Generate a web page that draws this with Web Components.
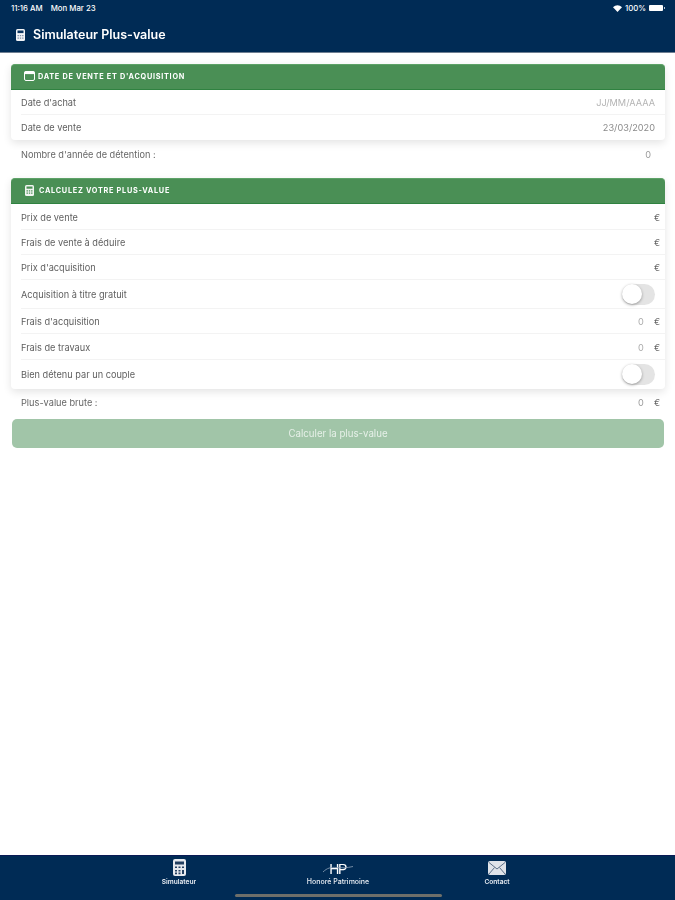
<!DOCTYPE html>
<html lang="fr">
<head>
<meta charset="UTF-8">
<title>Simulateur Plus-value</title>
<style>
  html, body { margin: 0; height: 100%; background: #fff; }
  body { font-family: Inter, "Liberation Sans", sans-serif; color: #555; }
  #app { display: flex; flex-direction: column; height: 900px; overflow: hidden; filter: blur(.5px); }
  main { flex: 1; display: flex; flex-direction: column; padding: 11px 10px 0 11px; }
</style>
</head>
<body>
<div id="app">
  <app-header title="Simulateur Plus-value"></app-header>
  <main>
    <form-card icon="calendar" heading="DATE DE VENTE ET D'ACQUISITION">
      <form-row label="Date d'achat" height="25"><span style="color:#b4b4b4">JJ/MM/AAAA</span></form-row>
      <form-row label="Date de vente" height="25" last><span style="color:#8a8a8a">23/03/2020</span></form-row>
    </form-card>
    <info-row label="Nombre d'année de détention :" value="0" height="28" bottom="10"></info-row>
    <form-card icon="calc" heading="CALCULEZ VOTRE PLUS-VALUE">
      <form-row label="Prix de vente" height="26"><b-euro></b-euro></form-row>
      <form-row label="Frais de vente à déduire" height="25"><b-euro></b-euro></form-row>
      <form-row label="Prix d'acquisition" height="25"><b-euro></b-euro></form-row>
      <form-row label="Acquisition à titre gratuit" height="29"><toggle-switch></toggle-switch></form-row>
      <form-row label="Frais d'acquisition" height="25"><b-euro zero></b-euro></form-row>
      <form-row label="Frais de travaux" height="26"><b-euro zero></b-euro></form-row>
      <form-row label="Bien détenu par un couple" height="29" last><toggle-switch></toggle-switch></form-row>
    </form-card>
    <info-row label="Plus-value brute :" value="0" euro height="26" bottom="4"></info-row>
    <submit-button>Calculer la plus-value</submit-button>
  </main>
  <tab-bar></tab-bar>
</div>

<script>
  const ICONS = {
    calendar: '<svg width="11" height="10" viewBox="0 0 11 10"><rect x=".5" y=".5" width="10" height="9" rx="1.5" fill="none" stroke="#fff"/><rect x=".5" y=".5" width="10" height="2.6" fill="#fff"/></svg>',
    calc: '<svg width="9" height="11" viewBox="0 0 9 11"><rect width="9" height="11" rx="1.5" fill="#f2f5f2"/><rect x="1.5" y="1.5" width="6" height="2.2" fill="#4a8f55"/><path d="M1.5 5.2h1.4v1.2H1.5zM3.8 5.2h1.4v1.2H3.8zM6.1 5.2h1.4v1.2H6.1zM1.5 7.6h1.4v1.2H1.5zM3.8 7.6h1.4v1.2H3.8zM6.1 7.6h1.4v1.2H6.1z" fill="#4a8f55"/></svg>'
  };

  class AppHeader extends HTMLElement {
    constructor() {
      super();
      this.attachShadow({ mode: 'open' });
      this.shadowRoot.innerHTML = `
        <style>
          :host { display: block; background: #002b55; color: #fff; height: 53px; border-bottom: 1px solid #6f7f92; box-sizing: border-box; }
          .status { height: 16px; display: flex; align-items: center; justify-content: space-between; padding: 0 10px 0 11px; font-size: 7.8px; font-weight: 500; }
          .status div { display: flex; align-items: center; gap: 3px; }
          .left { gap: 8px !important; }
          .batt { position: relative; width: 14px; height: 6px; background: #fff; border-radius: 1px; margin-right: 2px; }
          .batt::after { content: ""; position: absolute; right: -2px; top: 2px; width: 1px; height: 2px; background: #b8c3d0; }
          .bar { height: 36px; display: flex; align-items: center; gap: 8px; padding: 1px 0 0 16px; font-size: 12.5px; font-weight: 600; box-sizing: border-box; }
        </style>
        <div class="status">
          <div class="left"><span>11:16 AM</span><span>Mon Mar 23</span></div>
          <div>
            <svg width="9" height="7" viewBox="0 0 9 7"><path d="M0 2.2C2.6-.5 6.4-.5 9 2.2L4.5 7z" fill="#fff"/></svg>
            <span>100%</span><span class="batt"></span>
          </div>
        </div>
        <div class="bar">
          <svg width="9" height="12" viewBox="0 0 9 12"><rect width="9" height="12" rx="1.5" fill="#f2f4f7"/><rect x="1.5" y="1.5" width="6" height="2.6" fill="#0b3560"/><path d="M1.5 6h1.4v1.2H1.5zM3.8 6h1.4v1.2H3.800zM6.100 6h1.400v1.200H6.100zM1.500 8.600h1.400v1.200H1.500zM3.800 8.600h1.400v1.200H3.800zM6.100 8.600h1.400v1.200H6.100z" fill="#7f90a6"/></svg>
          <span>${this.getAttribute('title')}</span>
        </div>`;
    }
  }

  class FormCard extends HTMLElement {
    constructor() {
      super();
      this.attachShadow({ mode: 'open' });
      this.shadowRoot.innerHTML = `
        <style>
          :host { display: block; border-radius: 4px; background: #fff; box-shadow: 0 3px 9px rgba(0,0,0,.11); }
          .head { height: 26px; box-sizing: border-box; background: #4a8f55; border-bottom: 1px solid #2f8240; border-top: 1px solid #5da267; border-radius: 4px 4px 0 0; color: #fff; display: flex; align-items: center; gap: 3px; padding: 0 0 2px 13px; font-size: 7.3px; font-weight: 700; letter-spacing: .72px; }
          .calc { gap: 5px; padding-left: 14px; }
        </style>
        <div class="head ${this.getAttribute('icon') === 'calc' ? 'calc' : ''}">${ICONS[this.getAttribute('icon')]}<span>${this.getAttribute('heading')}</span></div>
        <slot></slot>`;
    }
  }

  class FormRow extends HTMLElement {
    constructor() {
      super();
      this.attachShadow({ mode: 'open' });
      this.shadowRoot.innerHTML = `
        <style>
          :host { display: block; padding-left: 10px; font-size: 9.2px; color: #5f5f5f; }
          .row { height: ${this.getAttribute('height')}px; box-sizing: border-box; display: flex; align-items: center; justify-content: space-between; padding: 1px 10px 0 0; border-bottom: 1px solid ${this.hasAttribute('last') ? 'transparent' : '#f3f3f3'}; }
        </style>
        <div class="row"><span>${this.getAttribute('label')}</span><slot></slot></div>`;
    }
  }

  class BEuro extends HTMLElement {
    constructor() {
      super();
      this.attachShadow({ mode: 'open' });
      this.shadowRoot.innerHTML = `
        <style>
          :host { display: flex; gap: 10px; margin-right: -5px; font-size: 9.2px; color: #666; }
          .z { color: #aaa; }
        </style>
        ${this.hasAttribute('zero') ? '<span class="z">0</span>' : ''}<span>€</span>`;
    }
  }

  class ToggleSwitch extends HTMLElement {
    constructor() {
      super();
      this.attachShadow({ mode: 'open' });
      this.shadowRoot.innerHTML = `
        <style>
          :host { display: block; position: relative; width: 33px; height: 21px; border-radius: 11px; background: #e4e4e4; }
          .knob { position: absolute; left: 0; top: 0; width: 20px; height: 20px; border-radius: 50%; background: #fff; box-shadow: 0 1px 3px rgba(0,0,0,.35); }
        </style>
        <div class="knob"></div>`;
    }
  }

  class InfoRow extends HTMLElement {
    constructor() {
      super();
      this.attachShadow({ mode: 'open' });
      const euro = this.hasAttribute('euro');
      this.shadowRoot.innerHTML = `
        <style>
          :host { display: flex; justify-content: space-between; align-items: center; height: ${this.getAttribute('height')}px; margin-bottom: ${this.getAttribute('bottom')}px; padding: 0 ${euro ? 5 : 14}px 0 10px; font-size: 9.2px; color: #666; }
          .v { display: flex; gap: 10px; color: #666; }
          .v span:first-child { color: #999; }
        </style>
        <span>${this.getAttribute('label')}</span>
        <span class="v"><span>${this.getAttribute('value')}</span>${euro ? '<span>€</span>' : ''}</span>`;
    }
  }

  class SubmitButton extends HTMLElement {
    constructor() {
      super();
      this.attachShadow({ mode: 'open' });
      this.shadowRoot.innerHTML = `
        <style>
          :host { display: flex; align-items: center; justify-content: center; height: 29px; margin: 0 1px; border-radius: 5px; background: #a1c5a8; color: #e6f0e8; font-size: 9.7px; }
        </style>
        <slot></slot>`;
    }
  }

  class TabBar extends HTMLElement {
    constructor() {
      super();
      this.attachShadow({ mode: 'open' });
      this.shadowRoot.innerHTML = `
        <style>
          :host { display: block; position: relative; height: 45px; box-sizing: border-box; background: #002b55; border-top: 1px solid #0a1a55; color: #fff; font-size: 6.6px; font-weight: 600; }
          .tabs { display: grid; grid-template-columns: 159px 159px 159px; justify-content: center; padding: 3px 0 0 0; margin-left: 1px; }
          .tab { display: flex; flex-direction: column; align-items: center; height: 27px; justify-content: space-between; }
          .tab span { color: #e8edf3; }
          .hp { font: 400 14px/14px "Liberation Sans", sans-serif; color: #fff; letter-spacing: -1.5px; height: 14px; margin-top: 3px; position: relative; padding-right: 1px; }
          .hp svg { position: absolute; left: -7px; top: 0; }
          .home { position: absolute; left: 235px; width: 207px; bottom: 3px; height: 3px; border-radius: 2px; background: #6e6f6a; }
        </style>
        <div class="tabs">
          <div class="tab">
            <svg width="13" height="17" viewBox="0 0 13 17"><rect width="13" height="17" rx="2" fill="#e6e9ee"/><rect x="2" y="2.500" width="9" height="3" fill="#223f60"/><path d="M2 7.5h2v1.6H2zM5.500 7.500h2v1.600h-2zM9 7.500h2v1.600H9zM2 11h2v1.600H2zM5.500 11h2v1.600h-2zM9 11h2v4H9zM2 13.600h2v1.600H2zM5.500 13.600h2v1.600h-2z" fill="#223f60"/></svg>
            <span>Simulateur</span>
          </div>
          <div class="tab">
            <div class="hp">HP<svg width="32" height="13" viewBox="0 0 32 13"><path d="M1 10C5 6 9 5 14 5.500s11 .5 17-1" fill="none" stroke="#8fa2b8" stroke-width=".8"/></svg></div>
            <span style="font-size:7px;font-weight:500">Honoré Patrimoine</span>
          </div>
          <div class="tab">
            <svg width="18" height="14" viewBox="0 0 18 14" style="margin-top:2px"><rect width="18" height="14" rx="2" fill="#dfe3e9"/><path d="M1 1.500 9 8l8-6.500M1 13l5.500-6.500M17 13l-5.500-6.500" fill="none" stroke="#5d7088" stroke-width="1"/></svg>
            <span>Contact</span>
          </div>
        </div>
        <div class="home"></div>`;
    }
  }

  customElements.define('app-header', AppHeader);
  customElements.define('form-card', FormCard);
  customElements.define('form-row', FormRow);
  customElements.define('b-euro', BEuro);
  customElements.define('toggle-switch', ToggleSwitch);
  customElements.define('info-row', InfoRow);
  customElements.define('submit-button', SubmitButton);
  customElements.define('tab-bar', TabBar);
</script>
</body>
</html>
